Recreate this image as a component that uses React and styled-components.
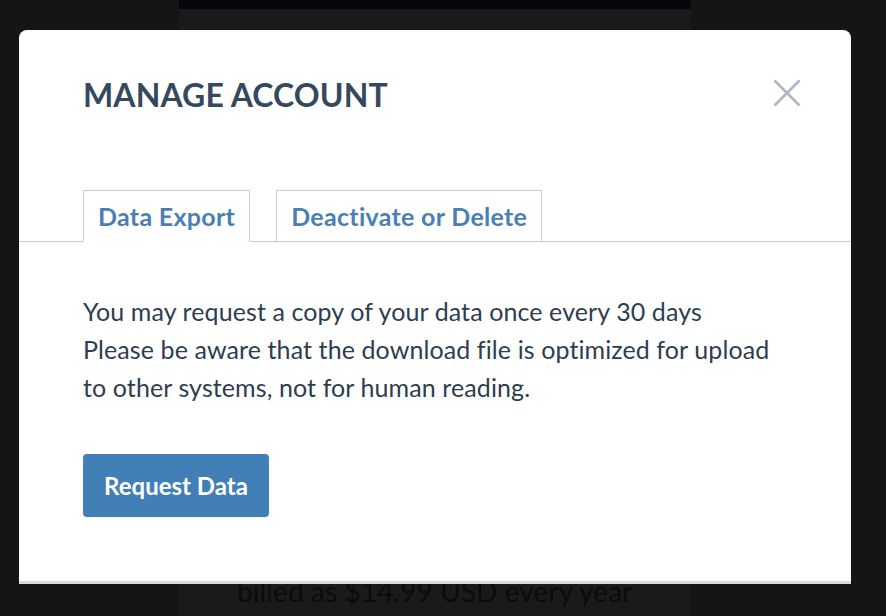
import React, { useState } from 'react';
import styled, { createGlobalStyle } from 'styled-components';

const GlobalStyle = createGlobalStyle`
    html, body {
        margin: 0;
        padding: 0;
        background: #151515;
        font-family: Lato, "Open Sans", sans-serif;
        overflow: hidden;
    }
`;

/* page behind the dialog */
const Page = styled.div`
    height: 616px;
    display: flex;
    padding-left: 179px;
`;

const Column = styled.div`
    width: 512px;
    height: 616px;
    background: #1a1a1a;
    display: flex;
    flex-direction: column;
`;

const TopStrip = styled.div`
    height: 9px;
    background: #04060b;
`;

const Billing = styled.div`
    padding: 566px 0 0 58px;
    font-size: 28px;
    letter-spacing: 0.1px;
    line-height: 1.2;
    color: #0b0b0b;
    white-space: nowrap;
`;

/* dialog */
const Overlay = styled.div`
    position: fixed;
    inset: 0;
    padding: 30px 0 0 19px;
`;

const Modal = styled.div`
    width: 832px;
    background: #fff;
    border-radius: 8px 8px 0 0;
    border-bottom: 3px solid #d9d9d9;
    padding-bottom: 64px;
`;

const Header = styled.div`
    display: flex;
    align-items: flex-start;
    justify-content: space-between;
    padding: 46px 50px 0 64px;
`;

const Title = styled.h1`
    margin: 0;
    font-size: 32px;
    line-height: 1.2;
    font-weight: 700;
    color: #34495e;
    letter-spacing: 0.1px;
`;

const CloseButton = styled.button`
    border: 0;
    background: none;
    padding: 0;
    margin-top: 3px;
    width: 28px;
    height: 28px;
    display: flex;
    align-items: center;
    justify-content: center;
    cursor: pointer;
`;

const TabList = styled.div`
    margin-top: 76px;
    display: flex;
    gap: 26px;
    padding-left: 64px;
    border-bottom: 1px solid #cccccc;
`;

const Tab = styled.button`
    height: 52px;
    margin-bottom: -1px;
    padding: 0 14px;
    border: 1px solid #cccccc;
    border-bottom-color: ${p => p.active ? '#fff' : '#cccccc'};
    background: #fff;
    font-family: Lato, sans-serif;
    font-size: 25px;
    letter-spacing: 0.3px;
    font-weight: 700;
    color: #4a7fb5;
    cursor: pointer;
`;

const Body = styled.div`
    padding: 50px 64px 0 64px;
`;

const Text = styled.p`
    margin: 0;
    font-size: 25px;
    letter-spacing: 0.1px;
    line-height: 38px;
    color: #2d3e50;
`;

const PrimaryButton = styled.button`
    margin-top: 48px;
    width: 186px;
    height: 63px;
    border: 0;
    border-radius: 4px;
    background: #427fb6;
    color: #fff;
    font-family: Lato, sans-serif;
    font-size: 24px;
    font-weight: 700;
    cursor: pointer;
`;

export default function App() {
    const [ tab, setTab ] = useState('export');

    return (
        <>
            <GlobalStyle />
            <Page>
                <Column>
                    <TopStrip />
                    <Billing>billed as $14.99 USD every year</Billing>
                </Column>
            </Page>
            <Overlay>
                <Modal>
                    <Header>
                        <Title>MANAGE ACCOUNT</Title>
                        <CloseButton aria-label="Close">
                            <svg width="28" height="28" viewBox="0 0 28 28">
                                <path d="M1.5 1.5 L26.5 26.5 M26.5 1.5 L1.5 26.5"
                                    stroke="#aeb6c2" strokeWidth="2.6" fill="none" />
                            </svg>
                        </CloseButton>
                    </Header>
                    <TabList>
                        <Tab active={tab === 'export'} onClick={() => setTab('export')}>Data Export</Tab>
                        <Tab active={tab === 'delete'} onClick={() => setTab('delete')}>Deactivate or Delete</Tab>
                    </TabList>
                    <Body>
                        <Text>
                            You may request a copy of your data once every 30 days<br />
                            Please be aware that the download file is optimized for upload
                            to other systems, not for human reading.
                        </Text>
                        <PrimaryButton>Request Data</PrimaryButton>
                    </Body>
                </Modal>
            </Overlay>
        </>
    );
}
